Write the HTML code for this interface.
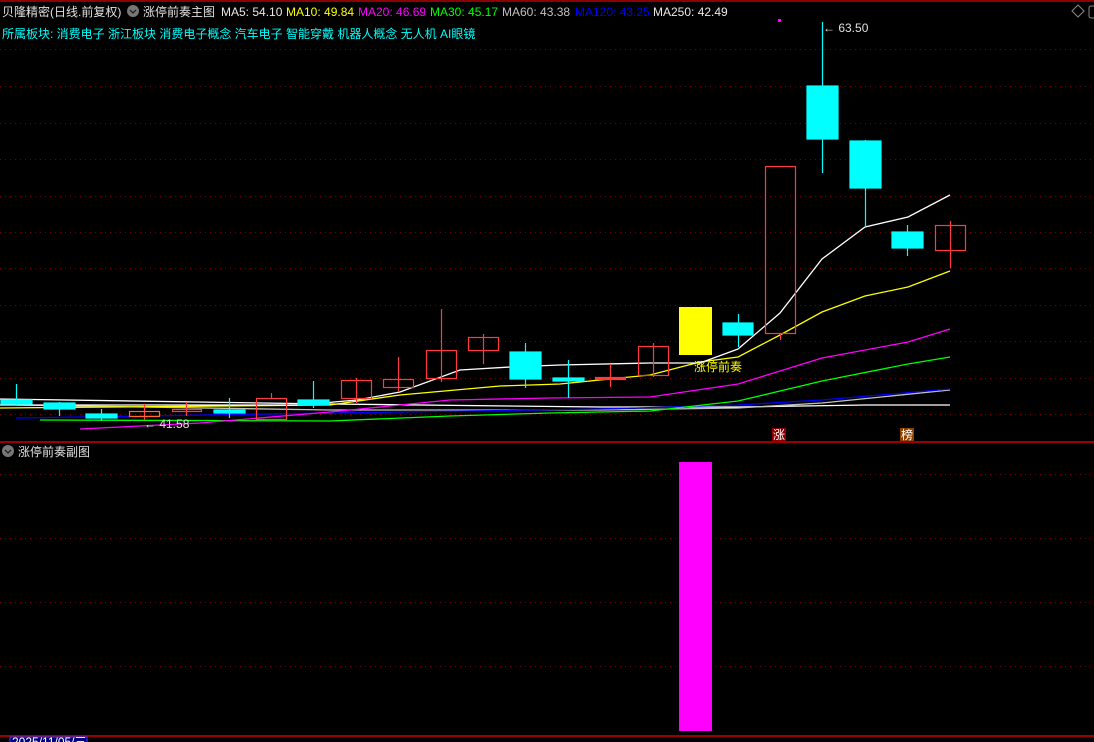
<!DOCTYPE html>
<html><head><meta charset="utf-8"><style>
html,body{margin:0;padding:0;background:#000;width:1094px;height:742px;overflow:hidden}
svg{display:block}
text{font-family:"Liberation Sans","Noto Sans CJK SC",sans-serif;font-size:12px}
</style></head><body>
<svg width="1094" height="742" viewBox="0 0 1094 742" xmlns="http://www.w3.org/2000/svg">
<rect width="1094" height="742" fill="#000"/>
<line x1="0" y1="1" x2="1094" y2="1" stroke="#8b0000" stroke-width="2"/>
<g stroke="#7a0000" stroke-width="1" stroke-dasharray="1 4">
<line x1="0" y1="49.5" x2="1094" y2="49.5"/><line x1="0" y1="86.5" x2="1094" y2="86.5"/>
<line x1="0" y1="123.5" x2="1094" y2="123.5"/><line x1="0" y1="159.5" x2="1094" y2="159.5"/>
<line x1="0" y1="196.5" x2="1094" y2="196.5"/><line x1="0" y1="232.5" x2="1094" y2="232.5"/>
<line x1="0" y1="268.5" x2="1094" y2="268.5"/><line x1="0" y1="305.5" x2="1094" y2="305.5"/>
<line x1="0" y1="341.5" x2="1094" y2="341.5"/><line x1="0" y1="378.5" x2="1094" y2="378.5"/>
<line x1="0" y1="414.5" x2="1094" y2="414.5"/>
<line x1="0" y1="474.5" x2="1094" y2="474.5"/><line x1="0" y1="538.5" x2="1094" y2="538.5"/>
<line x1="0" y1="602.5" x2="1094" y2="602.5"/><line x1="0" y1="666.5" x2="1094" y2="666.5"/>
</g>
<line x1="0" y1="442" x2="1094" y2="442" stroke="#9b0000" stroke-width="2"/>
<line x1="0" y1="736" x2="1094" y2="736" stroke="#9b0000" stroke-width="2"/>

<!-- header -->
<text x="2" y="16" fill="#e0e0e0" font-size="13">贝隆精密(日线.前复权)</text>
<circle cx="133" cy="11" r="6" fill="#777"/><path d="M130 10l3 3 3-3" stroke="#222" fill="none" stroke-width="1.3"/>
<text x="143" y="16" fill="#e0e0e0" font-size="13">涨停前奏主图</text>
<text x="221" y="16" fill="#e8e8e8">MA5: 54.10</text>
<text x="286" y="16" fill="#ffff00">MA10: 49.84</text>
<text x="358" y="16" fill="#ff00ff">MA20: 46.69</text>
<text x="430" y="16" fill="#00ff00">MA30: 45.17</text>
<text x="502" y="16" fill="#c0c0c0">MA60: 43.38</text>
<text x="575" y="16" fill="#0000ff">MA120: 43.25</text>
<text x="653" y="16" fill="#e8e8e8">MA250: 42.49</text>
<text x="2" y="38" fill="#00ffff" font-size="13">所属板块: 消费电子 浙江板块 消费电子概念 汽车电子 智能穿戴 机器人概念 无人机 AI眼镜</text>
<path d="M1078 5l6 6-6 6-6-6z" stroke="#888" fill="none"/>
<rect x="1089" y="6" width="8" height="12" rx="2" stroke="#888" fill="none"/>
<rect x="778" y="19" width="3" height="3" fill="#ff00ff"/>

<!-- MA lines -->
<g fill="none" stroke-width="1.3">
<polyline stroke="#fff" points="0,399 330,404 600,407 738,407 866,405 950,405"/>
<polyline stroke="#c0c0c0" points="16,405 330,410 600,410 738,408 822,403 950,390"/>
<polyline stroke="#0000ff" points="16,418 330,413 600,409 738,405 822,400 950,389"/>
<polyline stroke="#00ff00" points="40,420 330,421 450,416 550,413 650,411 738,401 822,381 908,364 950,357"/>
<polyline stroke="#ff00ff" points="80,429 200,423 330,412 450,400 550,398 650,397 738,384 822,358 908,342 950,329"/>
<polyline stroke="#ffff00" points="0,408 330,405 400,395 500,386 560,384 650,375 700,362 738,357 780,335 822,312 865,296 908,287 950,271"/>
<polyline stroke="#fff" points="0,405 300,405 357,400 400,392 460,370 510,367 560,365 650,363 700,363 738,349 780,313 822,259 865,227 908,217 950,195"/>
</g>

<!-- candles -->
<g stroke-width="1.2">
<g stroke="#00ffff" fill="#00ffff">
<line x1="16.5" y1="384" x2="16.5" y2="406"/><rect x="1" y="400" width="31" height="4"/>
<line x1="59.5" y1="402" x2="59.5" y2="416"/><rect x="44" y="403" width="31" height="6"/>
<line x1="101.5" y1="409" x2="101.5" y2="421"/><rect x="86" y="414" width="31" height="4"/>
<line x1="229.5" y1="398" x2="229.5" y2="418"/><rect x="214" y="410" width="31" height="3"/>
<line x1="313.5" y1="381" x2="313.5" y2="408"/><rect x="298" y="400" width="31" height="5"/>
<line x1="525.5" y1="343" x2="525.5" y2="388"/><rect x="510" y="352" width="31" height="27"/>
<line x1="568.5" y1="360" x2="568.5" y2="398"/><rect x="553" y="378" width="31" height="3"/>
<line x1="738.5" y1="314" x2="738.5" y2="347"/><rect x="723" y="323" width="30" height="12"/>
<line x1="822.5" y1="22" x2="822.5" y2="173"/><rect x="807" y="86" width="31" height="53"/>
<line x1="865.5" y1="140" x2="865.5" y2="227"/><rect x="850" y="141" width="31" height="47"/>
<line x1="907.5" y1="225" x2="907.5" y2="256"/><rect x="892" y="232" width="31" height="16"/>
</g>
<g stroke="#ff3b3b" fill="none">
<line x1="144.5" y1="404" x2="144.5" y2="420"/><rect x="129.5" y="411.5" width="30" height="5" stroke="#ff6a30"/>
<line x1="186.5" y1="402" x2="186.5" y2="416"/><rect x="172.5" y="409.5" width="29" height="2"/>
<line x1="271.5" y1="393" x2="271.5" y2="398"/><rect x="256.5" y="398.5" width="30" height="21"/>
<line x1="356.5" y1="378" x2="356.5" y2="403"/><rect x="341.5" y="380.5" width="30" height="18"/>
<line x1="398.5" y1="357" x2="398.5" y2="392"/><rect x="383.5" y="379.5" width="30" height="8"/>
<line x1="441.5" y1="309" x2="441.5" y2="382"/><rect x="426.5" y="350.5" width="30" height="28"/>
<line x1="483.5" y1="334" x2="483.5" y2="364"/><rect x="468.5" y="337.5" width="30" height="13"/>
<line x1="610.5" y1="364" x2="610.5" y2="387"/><rect x="595.5" y="377.5" width="30" height="2" fill="#ff3b3b"/>
<line x1="653.5" y1="343" x2="653.5" y2="377"/><rect x="638.5" y="346.5" width="30" height="29"/>
<line x1="780.5" y1="333" x2="780.5" y2="340"/><rect x="765.5" y="166.5" width="30" height="167"/>
<line x1="950.5" y1="221" x2="950.5" y2="268"/><rect x="935.5" y="225.5" width="30" height="25"/>
</g>
<rect x="679" y="307" width="33" height="48" fill="#ffff00"/>
</g>

<text x="823" y="32" fill="#e0e0e0" font-size="12">← 63.50</text>
<text x="144" y="428" fill="#e0e0e0" font-size="12">← 41.58</text>
<text x="694" y="371" fill="#ffff00" font-size="13">涨停前奏</text>
<rect x="772" y="428" width="14" height="13" fill="#8b0000"/><text x="773" y="439" fill="#fff" font-size="12">涨</text>
<rect x="900" y="428" width="14" height="13" fill="#8b4000"/><text x="901" y="439" fill="#fff" font-size="12">榜</text>

<!-- lower pane -->
<circle cx="8" cy="451" r="6" fill="#777"/><path d="M5 450l3 3 3-3" stroke="#222" fill="none" stroke-width="1.3"/>
<text x="18" y="456" fill="#e0e0e0" font-size="13">涨停前奏副图</text>
<rect x="679" y="462" width="33" height="269" fill="#ff00ff"/>
<rect x="10" y="737" width="77" height="8" fill="#000080" stroke="#4040ff"/>
<text x="12" y="746" fill="#fff" font-size="11">2025/11/05/三</text>
</svg>
</body></html>
